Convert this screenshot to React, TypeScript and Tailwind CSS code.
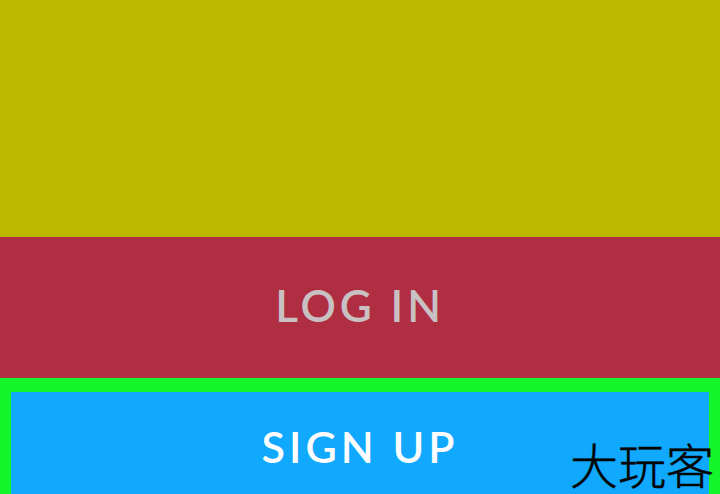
export default function App() {
  return (
    <div className="relative flex h-[494px] w-[720px] flex-col overflow-hidden font-['Lato','Liberation_Sans',sans-serif]">
      <div className="h-[237px] bg-[#bab900]" />
      <div className="flex h-[141px] items-center justify-center bg-[#b02e41] pb-[6px]">
        <span className="text-[44px] leading-none font-semibold tracking-[3.9px] text-[#c9c0c4]">LOG IN</span>
      </div>
      <div className="flex-1 bg-[#16f52b] px-[11px] pt-[14px]">
        <div className="flex h-full items-start justify-center bg-[#10a9fe] pt-[33px]">
          <span className="text-[43px] leading-none font-semibold tracking-[4px] text-[#fdfdff]">SIGN UP</span>
        </div>
      </div>
      <div className="absolute top-[435px] left-[570px] text-[48px] leading-[56px] font-light whitespace-nowrap text-[#050505] [-webkit-text-stroke:0.5px_#050505] font-['Noto_Sans_CJK_SC',sans-serif]">
        大玩客
      </div>
    </div>
  );
}
